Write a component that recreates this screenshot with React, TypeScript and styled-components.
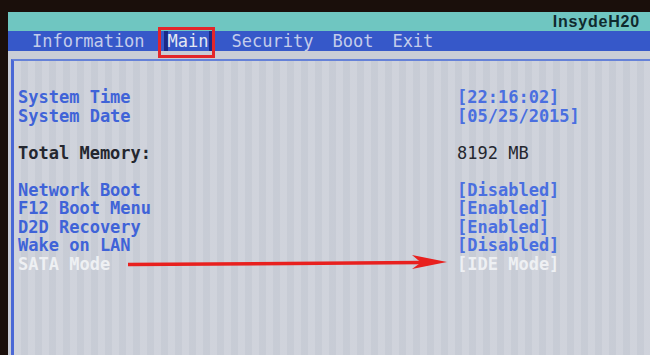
import styled, { createGlobalStyle } from "styled-components";

const GlobalStyle = createGlobalStyle`
  body {
    margin: 0;
    background: #1a0f0b;
  }
`;

const Screen = styled.div`
  position: relative;
  width: 650px;
  height: 355px;
  box-sizing: border-box;
  padding: 12px 0 0 8px;
  background: #1a0f0b;
  display: flex;
  flex-direction: column;
  overflow: hidden;
  font-family: "DejaVu Sans Mono", "Liberation Mono", monospace;
`;

const TitleBar = styled.div`
  height: 19px;
  background: #6fc6c1;
  display: flex;
  align-items: center;
  justify-content: flex-end;
  padding-right: 10px;
`;

const Brand = styled.span`
  font-family: "Liberation Sans", Arial, sans-serif;
  font-weight: 700;
  font-size: 16px;
  letter-spacing: 0.8px;
  color: #0f2a2e;
`;

const MenuBar = styled.nav`
  height: 20px;
  background: #3658c9;
  display: flex;
  align-items: stretch;
  gap: 19px;
  padding-left: 24px;
`;

const Tab = styled.span<{ $active?: boolean }>`
  position: relative;
  display: flex;
  align-items: center;
  font-size: 17px;
  color: ${(p) => (p.$active ? "#e4e8f2" : "#c3cceb")};
  border-left: ${(p) => (p.$active ? "4px solid #1b2a86" : "none")};
  border-right: ${(p) => (p.$active ? "4px solid #1b2a86" : "none")};

  ${(p) =>
    p.$active &&
    `
    &::after {
      content: "";
      position: absolute;
      left: -10px;
      right: -6px;
      top: -4px;
      bottom: -7px;
      border: 3px solid #e3262a;
    }
  `}
`;

const Body = styled.main`
  flex: 1;
  background: #c9cdd6;
  padding: 8px 0 0 3px;
  display: flex;
`;

const Panel = styled.section`
  flex: 1;
  border-top: 2px solid #6682d8;
  border-left: 3px solid #4a68d6;
  padding: 26px 0 0 4px;
  background-color: #ccd0d9;
  background-image: repeating-linear-gradient(
    90deg,
    rgba(255, 255, 255, 0.07) 0 7px,
    rgba(120, 130, 150, 0.05) 7px 14px
  );
`;

const Row = styled.div`
  display: grid;
  grid-template-columns: 439px 1fr;
  height: 18.5px;
  align-items: center;
  font-size: 17px;
  font-weight: 700;
  white-space: pre;
`;

type Tone = "link" | "info" | "selected";

const toneColor: Record<Tone, string> = {
  link: "#3f63d8",
  info: "#24272f",
  selected: "#eef0f3",
};

const Label = styled.span<{ $tone: Tone }>`
  color: ${(p) => toneColor[p.$tone]};
`;

const Value = styled.span<{ $tone: Tone }>`
  color: ${(p) => (p.$tone === "link" ? "#4a6fe0" : toneColor[p.$tone])};
  font-weight: ${(p) => (p.$tone === "info" ? 400 : 700)};
`;

const Arrow = styled.svg`
  position: absolute;
  left: 0;
  top: 0;
  pointer-events: none;
`;

type Item = { label: string; value: string; tone: Tone } | null;

const items: Item[] = [
  { label: "System Time", value: "[22:16:02]", tone: "link" },
  { label: "System Date", value: "[05/25/2015]", tone: "link" },
  null,
  { label: "Total Memory:", value: "8192 MB", tone: "info" },
  null,
  { label: "Network Boot", value: "[Disabled]", tone: "link" },
  { label: "F12 Boot Menu", value: "[Enabled]", tone: "link" },
  { label: "D2D Recovery", value: "[Enabled]", tone: "link" },
  { label: "Wake on LAN", value: "[Disabled]", tone: "link" },
  { label: "SATA Mode", value: "[IDE Mode]", tone: "selected" },
];

const tabs = ["Information", "Main", "Security", "Boot", "Exit"];

export default function App() {
  return (
    <>
      <GlobalStyle />
      <Screen>
        <TitleBar>
          <Brand>InsydeH20</Brand>
        </TitleBar>
        <MenuBar>
          {tabs.map((t) => (
            <Tab key={t} $active={t === "Main"}>
              {t}
            </Tab>
          ))}
        </MenuBar>
        <Body>
          <Panel>
            {items.map((it, i) =>
              it ? (
                <Row key={i}>
                  <Label $tone={it.tone}>{it.label}</Label>
                  <Value $tone={it.tone}>{it.value}</Value>
                </Row>
              ) : (
                <Row key={i} />
              )
            )}
          </Panel>
        </Body>
        <Arrow width="650" height="355" viewBox="0 0 650 355">
          <line x1="128" y1="264.5" x2="422" y2="262.5" stroke="#e8201e" strokeWidth="3.5" />
          <polygon points="412,255 447,262 412,269 421,262.5" fill="#e8201e" />
        </Arrow>
      </Screen>
    </>
  );
}
